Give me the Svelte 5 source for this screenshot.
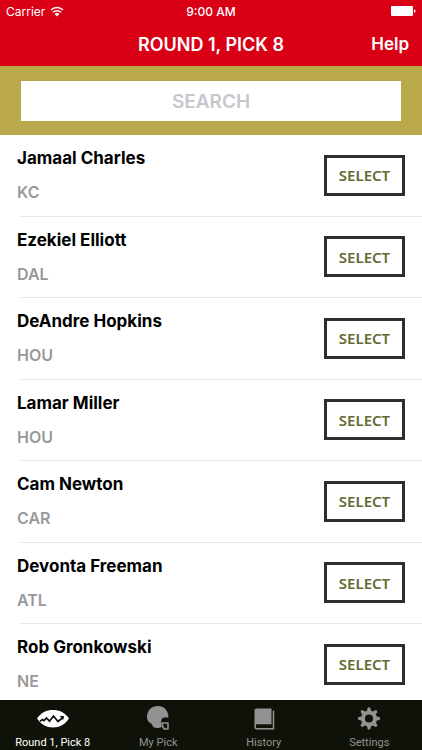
<script lang="ts">
	const players = [
		{ name: 'Jamaal Charles', team: 'KC' },
		{ name: 'Ezekiel Elliott', team: 'DAL' },
		{ name: 'DeAndre Hopkins', team: 'HOU' },
		{ name: 'Lamar Miller', team: 'HOU' },
		{ name: 'Cam Newton', team: 'CAR' },
		{ name: 'Devonta Freeman', team: 'ATL' },
		{ name: 'Rob Gronkowski', team: 'NE' }
	];

	const tabs = [
		{ id: 'draft', label: 'Round 1, Pick 8' },
		{ id: 'pick', label: 'My Pick' },
		{ id: 'history', label: 'History' },
		{ id: 'settings', label: 'Settings' }
	];

	const teeth = [0, 45, 90, 135, 180, 225, 270, 315];

	let active = $state('draft');
	let query = $state('');

	const visible = $derived(
		players.filter((p) => p.name.toLowerCase().includes(query.toLowerCase()))
	);
</script>

<div class="screen">
	<header>
		<div class="status">
			<span class="carrier">
				Carrier
				<svg width="14" height="11" viewBox="0 0 14 11" aria-hidden="true">
					<path d="M1 4a8.5 8.5 0 0 1 12 0M3 6.3a5.7 5.7 0 0 1 8 0" fill="none" stroke="currentColor" stroke-width="1.5" />
					<path d="M4.6 7.9a3.4 3.4 0 0 1 4.8 0L7 10.4z" fill="currentColor" />
				</svg>
			</span>
			<span class="time">9:00 AM</span>
			<svg class="battery" width="25" height="10" viewBox="0 0 25 10" aria-hidden="true">
				<rect width="22" height="10" rx="1" fill="currentColor" />
				<path d="M23 3.2q1.6.4 1.6 1.8T23 6.8z" fill="currentColor" />
			</svg>
		</div>
		<div class="navbar">
			<h1>ROUND 1, PICK 8</h1>
			<a href="#help">Help</a>
		</div>
	</header>

	<div class="search">
		<input type="text" placeholder="SEARCH" aria-label="Search players" bind:value={query} />
	</div>

	<ul class="players">
		{#each visible as player (player.name)}
			<li>
				<div class="info">
					<span class="name">{player.name}</span>
					<span class="team">{player.team}</span>
				</div>
				<button type="button" aria-label="SELECT {player.name}">SELECT</button>
			</li>
		{/each}
	</ul>

	<nav>
		{#each tabs as tab (tab.id)}
			<button type="button" class:active={active === tab.id} onclick={() => (active = tab.id)}>
				<svg width="32" height="26" viewBox="0 0 32 26" aria-hidden="true">
					{#if tab.id === 'draft'}
						<path d="M0 12.5C4 6.500 9.500 4 16 4s12 2.500 16 8.500c-4 6-9.500 9-16 9s-12-3-16-9z" fill="currentColor" />
						<path d="M3 15.200l2.500-1.700 1.500 1.200 2.500-2.700 3 3.200L16.500 10l4.500 5.500 5-4" fill="none" stroke="#0f1208" stroke-width="1.700" />
						<path d="M22.800 10h4.200l-.8 4z" fill="#0f1208" />
					{:else if tab.id === 'pick'}
						<path d="M5 11C5 4.500 9.500 0 16 0c6 0 10.300 4.200 10.500 11.500h-3.500c-2.800 0-4 1.700-3.800 4.300l.5 5.200c-2.500 1.200-5.500 1.300-8.200.3-1-2-1.700-3.300-3.200-4.300C6 15.800 5 13.800 5 11z" fill="currentColor" />
						<path d="M19.500 17h6.500v6h-2.500c-1.500 0-2.200-.8-2.600-2.300L20 17" fill="none" stroke="currentColor" stroke-width="1.600" stroke-linejoin="round" />
					{:else if tab.id === 'history'}
						<path d="M8.500 2.500H23.500v15.800H8c-.7 0-1.200.3-1.500.8V4.500c0-1.200.8-2 2-2z" fill="currentColor" />
						<path d="M25.500 4.500v18.200H8.500c-.8 0-1.300-.6-1.300-1.500V18" fill="none" stroke="currentColor" stroke-width="1.500" />
					{:else}
						<g fill="currentColor">
							{#each teeth as angle}
								<path d="M13.800 6l.8-4q1.400-1.400 2.800 0l.8 4z" transform="rotate({angle} 16 12.500)" />
							{/each}
						</g>
						<circle cx="16" cy="12.500" r="6" fill="none" stroke="currentColor" stroke-width="4" />
					{/if}
				</svg>
				<span>{tab.label}</span>
			</button>
		{/each}
	</nav>
</div>

<style>
	:global(body) {
		margin: 0;
		background: #fff;
	}

	.screen {
		display: flex;
		flex-direction: column;
		height: 100vh;
		font-family: Inter, sans-serif;
	}

	header {
		background: #d90015;
		color: #fff;
	}

	.status {
		display: grid;
		grid-template-columns: 1fr auto 1fr;
		align-items: center;
		height: 22px;
		padding: 0 6px;
		font-size: 12px;
	}

	.carrier {
		display: flex;
		align-items: center;
		gap: 5px;
	}

	.time {
		font-weight: 500;
	}

	.battery {
		justify-self: end;
	}

	.navbar {
		display: grid;
		grid-template-columns: 1fr auto 1fr;
		align-items: center;
		height: 44px;
		padding: 0 13px;
	}

	h1 {
		grid-column: 2;
		margin: 0;
		font-size: 18px;
		font-weight: 600;
	}

	.navbar a {
		justify-self: end;
		color: inherit;
		font-size: 17px;
		font-weight: 600;
		text-decoration: none;
	}

	.search {
		padding: 15px 21px 14px;
		background: #b9a94a;
	}

	.search input {
		display: block;
		box-sizing: border-box;
		width: 100%;
		height: 40px;
		padding: 0 8px;
		border: 0;
		border-radius: 0;
		background: #fff;
		color: #000;
		font: 600 19px Inter, sans-serif;
		text-align: center;
	}

	.search input::placeholder {
		color: #c7c7cd;
		opacity: 1;
	}

	.players {
		flex: 1;
		min-height: 0;
		margin: 0;
		padding: 0;
		overflow-y: auto;
		scrollbar-width: none;
		list-style: none;
	}

	.players li {
		display: flex;
		justify-content: space-between;
		align-items: center;
		box-sizing: border-box;
		height: 82px;
		padding: 0 17px 2px;
		background: linear-gradient(#e9e9e9, #e9e9e9) 20px 100% / 100% 1px no-repeat;
	}

	.players li:nth-child(even) {
		height: 81px;
	}

	.info {
		display: flex;
		flex-direction: column;
		gap: 10px;
	}

	.name {
		color: #000;
		font-size: 17px;
		font-weight: 700;
		line-height: 24px;
	}

	.team {
		color: #999;
		font-size: 16px;
		font-weight: 600;
		line-height: 24px;
	}

	.players button {
		width: 81px;
		height: 41px;
		padding: 0;
		border: 3px solid #2e2e30;
		border-radius: 0;
		background: #fff;
		color: #636b33;
		font: 600 15px 'Noto Sans', sans-serif;
	}

	nav {
		display: grid;
		grid-template-columns: repeat(4, 1fr);
		height: 50px;
		background: #0f1208;
	}

	nav button {
		display: flex;
		flex-direction: column;
		align-items: center;
		padding: 6px 0 0;
		border: 0;
		background: none;
		color: #929292;
		font: 11px Roboto, sans-serif;
	}

	nav span {
		margin-top: 4px;
		line-height: 14px;
		white-space: nowrap;
	}

	nav .active {
		color: #fff;
	}
</style>
